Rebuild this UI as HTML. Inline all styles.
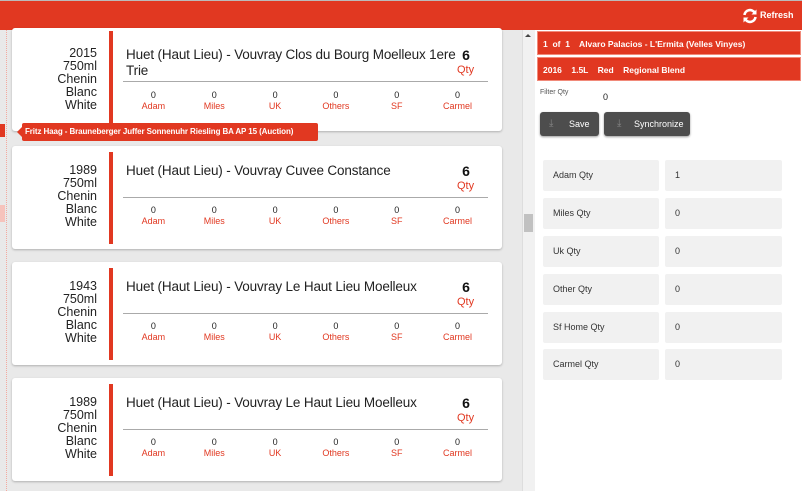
<!DOCTYPE html>
<html><head><style>
*{margin:0;padding:0;box-sizing:border-box}
body{width:802px;height:491px;overflow:hidden;font-family:"Liberation Sans",sans-serif;background:#fff;position:relative}
.abs{position:absolute}
.top{left:0;top:0;width:802px;height:30px;background:#e13821;border-top:1px solid #bbb}
.left{left:0;top:30px;width:522px;height:461px;background:#e9e9e9}
.dots{left:6px;top:30px;width:0;height:461px;border-left:1px dotted #f3a9a0}
.card{left:12px;width:490px;height:103px;background:#fff;border-radius:3px;box-shadow:0 1px 2px rgba(0,0,0,.25)}
.bar{position:absolute;left:97px;top:6px;width:4px;bottom:5px;background:#e13821}
.meta{position:absolute;right:405px;top:18px;text-align:right;font-size:12.5px;line-height:13px;color:#222}
.title{position:absolute;left:114px;top:17px;width:330px;font-size:13.5px;line-height:16px;color:#222;letter-spacing:-0.15px}
.qn{position:absolute;left:448px;top:17px;font-size:14px;font-weight:bold;color:#111;width:12px;text-align:center}
.ql{position:absolute;left:445px;top:34px;font-size:11px;color:#e13821}
.line{position:absolute;left:111px;top:51px;width:365px;height:1px;background:#aaa}
.cols{position:absolute;left:111px;top:59px;width:365px;display:flex}
.cols div{width:61px;text-align:center;font-size:9px;line-height:11px;color:#222}
.cols span{display:block;color:#e13821}
.sb{left:522px;top:30px;width:13px;height:461px;background:#f1f1f1;border-left:1px solid #ddd}
.hdr{left:537px;width:264px;height:24px;background:#e13821;color:#fff;font-size:8.5px;font-weight:bold;padding-left:5px;line-height:24px;border:1px solid #f18a7a;white-space:pre}
.btn{top:112px;height:24px;background:#4d4d4d;border-radius:3px;color:#fff;font-size:9px;line-height:24px;box-shadow:0 1px 2px rgba(0,0,0,.4)}
.fl,.fv{height:31px;background:#f1f1f1;border-radius:2px;font-size:9px;color:#333;line-height:31px;padding-left:10px}
.fl{left:543px;width:116px}.fv{left:665px;width:117px}
</style></head><body>
<div class="abs top">
<svg class="abs" style="left:742px;top:7px" width="16" height="16" viewBox="0 0 16 16"><path d="M2.5 7A5.5 5.5 0 0 1 12.5 4.5" stroke="#fff" stroke-width="2.6" fill="none"/><path d="M14.5 1.5v5h-5z" fill="#fff"/><path d="M13.5 9A5.5 5.5 0 0 1 3.5 11.5" stroke="#fff" stroke-width="2.6" fill="none"/><path d="M1.5 14.5v-5h5z" fill="#fff"/></svg>
<div class="abs" style="left:760px;top:9px;color:#fff;font-size:9px;font-weight:bold">Refresh</div>
</div>
<div class="abs left"></div>
<div class="abs dots"></div>
<div class="abs" style="left:0;top:205px;width:5px;height:17px;background:#f6c3bc"></div>

<div class="abs card" style="top:28px">
<div class="bar" style="top:3px"></div>
<div class="meta" style="top:19px">2015<br>750ml<br>Chenin<br>Blanc<br>White</div>
<div class="title" style="top:19px;width:336px">Huet (Haut Lieu) - Vouvray Clos du Bourg Moelleux 1ere Trie</div>
<div class="qn" style="top:19px">6</div><div class="ql" style="top:36px">Qty</div>
<div class="line" style="top:53px"></div>
<div class="cols" style="top:62px"><div>0<span>Adam</span></div><div>0<span>Miles</span></div><div>0<span>UK</span></div><div>0<span>Others</span></div><div>0<span>SF</span></div><div>0<span>Carmel</span></div></div>
</div>

<div class="abs card" style="top:146px">
<div class="bar"></div>
<div class="meta">1989<br>750ml<br>Chenin<br>Blanc<br>White</div>
<div class="title">Huet (Haut Lieu) - Vouvray Cuvee Constance</div>
<div class="qn">6</div><div class="ql">Qty</div>
<div class="line"></div>
<div class="cols"><div>0<span>Adam</span></div><div>0<span>Miles</span></div><div>0<span>UK</span></div><div>0<span>Others</span></div><div>0<span>SF</span></div><div>0<span>Carmel</span></div></div>
</div>

<div class="abs card" style="top:262px">
<div class="bar"></div>
<div class="meta">1943<br>750ml<br>Chenin<br>Blanc<br>White</div>
<div class="title">Huet (Haut Lieu) - Vouvray Le Haut Lieu Moelleux</div>
<div class="qn">6</div><div class="ql">Qty</div>
<div class="line"></div>
<div class="cols"><div>0<span>Adam</span></div><div>0<span>Miles</span></div><div>0<span>UK</span></div><div>0<span>Others</span></div><div>0<span>SF</span></div><div>0<span>Carmel</span></div></div>
</div>

<div class="abs card" style="top:378px">
<div class="bar"></div>
<div class="meta">1989<br>750ml<br>Chenin<br>Blanc<br>White</div>
<div class="title">Huet (Haut Lieu) - Vouvray Le Haut Lieu Moelleux</div>
<div class="qn">6</div><div class="ql">Qty</div>
<div class="line"></div>
<div class="cols"><div>0<span>Adam</span></div><div>0<span>Miles</span></div><div>0<span>UK</span></div><div>0<span>Others</span></div><div>0<span>SF</span></div><div>0<span>Carmel</span></div></div>
</div>

<div class="abs" style="left:0;top:124px;width:5px;height:13px;background:#e13821"></div>
<div class="abs" style="left:17px;top:127px;width:0;height:0;border-top:5px solid transparent;border-bottom:5px solid transparent;border-right:5px solid #e13821"></div>
<div class="abs" style="left:22px;top:123px;width:296px;height:18px;background:#e13821;color:#fff;font-size:8px;font-weight:bold;line-height:18px;padding-left:3px;border-radius:2px;white-space:nowrap;overflow:hidden;letter-spacing:-0.1px">Fritz Haag - Brauneberger Juffer Sonnenuhr Riesling BA AP 15 (Auction)</div>

<div class="abs sb"></div>
<div class="abs" style="left:525px;top:34px;width:0;height:0;border-left:3px solid transparent;border-right:3px solid transparent;border-bottom:3px solid #444"></div>
<div class="abs" style="left:524px;top:214px;width:9px;height:18px;background:#c1c1c1"></div>

<div class="abs hdr" style="top:31px">1  of  1    Alvaro Palacios - L'Ermita (Velles Vinyes)</div>
<div class="abs hdr" style="top:57px">2016    1.5L    Red    Regional Blend</div>
<div class="abs" style="left:540px;top:89px;font-size:7px;color:#555">Filter Qty</div>
<div class="abs" style="left:603px;top:92px;font-size:9px;color:#222">0</div>
<div class="abs btn" style="left:540px;width:59px"><span style="position:absolute;left:9px;top:0;color:#888;font-size:10px">⤓</span><span style="position:absolute;left:29px">Save</span></div>
<div class="abs btn" style="left:604px;width:86px"><span style="position:absolute;left:13px;color:#888;font-size:10px">⤓</span><span style="position:absolute;left:30px">Synchronize</span></div>

<div class="abs fl" style="top:160px">Adam Qty</div><div class="abs fv" style="top:160px">1</div>
<div class="abs fl" style="top:198px">Miles Qty</div><div class="abs fv" style="top:198px">0</div>
<div class="abs fl" style="top:236px">Uk Qty</div><div class="abs fv" style="top:236px">0</div>
<div class="abs fl" style="top:274px">Other Qty</div><div class="abs fv" style="top:274px">0</div>
<div class="abs fl" style="top:312px">Sf Home Qty</div><div class="abs fv" style="top:312px">0</div>
<div class="abs fl" style="top:349px">Carmel Qty</div><div class="abs fv" style="top:349px">0</div>
</body></html>
